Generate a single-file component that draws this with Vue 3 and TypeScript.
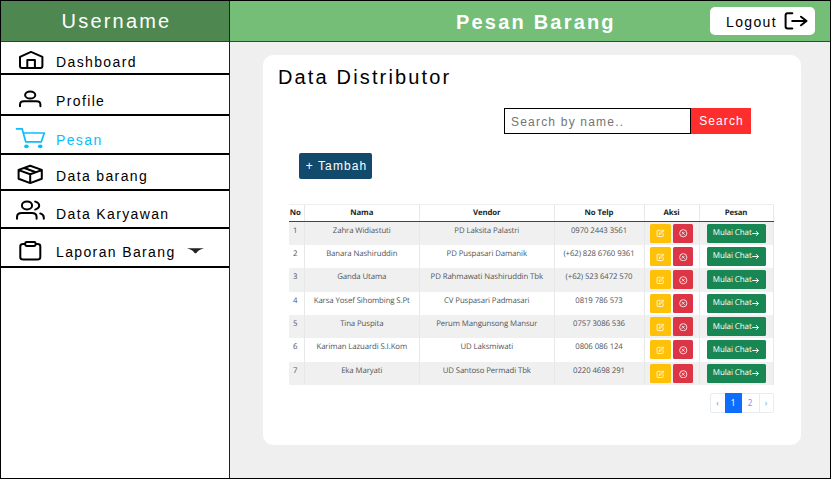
<script setup lang="ts">
interface MenuItem {
  label: string
  icon: string
  height: number
  shift: number
}
interface Distributor {
  name: string
  vendor: string
  phone: string
}

const menu: MenuItem[] = [
  { label: 'Dashboard', icon: 'home', height: 33, shift: 4 },
  { label: 'Profile', icon: 'user', height: 41, shift: 7 },
  { label: 'Pesan', icon: 'cart', height: 38.5, shift: 6 },
  { label: 'Data barang', icon: 'box', height: 36, shift: 4 },
  { label: 'Data Karyawan', icon: 'users', height: 38.5, shift: 5 },
  { label: 'Laporan Barang', icon: 'clipboard', height: 38.5, shift: 4 },
]

const rows: Distributor[] = [
  { name: 'Zahra Widiastuti', vendor: 'PD Laksita Palastri', phone: '0970 2443 3561' },
  { name: 'Banara Nashiruddin', vendor: 'PD Puspasari Damanik', phone: '(+62) 828 6760 9361' },
  { name: 'Ganda Utama', vendor: 'PD Rahmawati Nashiruddin Tbk', phone: '(+62) 523 6472 570' },
  { name: 'Karsa Yosef Sihombing S.Pt', vendor: 'CV Puspasari Padmasari', phone: '0819 786 573' },
  { name: 'Tina Puspita', vendor: 'Perum Mangunsong Mansur', phone: '0757 3086 536' },
  { name: 'Kariman Lazuardi S.I.Kom', vendor: 'UD Laksmiwati', phone: '0806 086 124' },
  { name: 'Eka Maryati', vendor: 'UD Santoso Permadi Tbk', phone: '0220 4698 291' },
]
</script>

<template>
  <div class="page">
    <aside class="sidebar">
      <div class="username">Username</div>
      <nav>
        <a
          v-for="item in menu"
          :key="item.label"
          class="item"
          :class="[item.icon, { active: item.icon === 'cart' }]"
          :style="{ height: item.height + 'px' }"
        >
          <svg class="icon" viewBox="0 0 30 24" fill="none" stroke="currentColor" stroke-width="2" stroke-linecap="round" stroke-linejoin="round">
            <template v-if="item.icon === 'home'">
              <path d="M5 8.900 16 3.900l11.400 5v9.200q0 2-2 2H7q-2 0-2-2z" />
              <path d="M12.300 20v-8.100h7.600V20" />
            </template>
            <template v-else-if="item.icon === 'user'">
              <ellipse cx="15.200" cy="8" rx="5.100" ry="3.600" />
              <path d="M5 19.300v-1.600q0-3.400 4-3.400h12.400q4 0 4 3.400v1.600" />
            </template>
            <template v-else-if="item.icon === 'cart'">
              <path d="M1.500 2.800h5.600l3.600 13h15.600l3-8.800H8.300" stroke-width="1.700" />
              <ellipse cx="11.400" cy="20.400" rx="2.300" ry="1.800" fill="currentColor" stroke="none" />
              <ellipse cx="25.200" cy="20.400" rx="2.300" ry="1.800" fill="currentColor" stroke="none" />
            </template>
            <template v-else-if="item.icon === 'box'">
              <path d="M15.200 3.800 26.800 7.900v8.900l-11.600 4.300-11.600-4.300V7.900zM3.700 8.100l11.500 4.200 11.500-4.200M15.200 12.300v8.600M9.300 6l11.500 4.200" />
            </template>
            <template v-else-if="item.icon === 'users'">
              <ellipse cx="12" cy="7.400" rx="5.100" ry="4" />
              <path d="M2 20.800v-1.600q0-4.100 4.800-4.100h10q4.800 0 4.800 4.100v1.600M20.200 3.600q4 1.200 4 4t-4 4M25.200 15.400q3.600 1 3.600 4.200v1.200" />
            </template>
            <template v-else>
              <path d="M9.700 5H8.300q-3 0-3 2.200v11q0 2.200 3 2.200h14q3 0 3-2.200V7.200q0-2.200-3-2.200h-1.400" />
              <rect x="10.200" y="3" width="10.400" height="3.900" rx="1.400" />
            </template>
          </svg>
          <span class="label" :style="{ paddingTop: item.shift + 'px' }">{{ item.label }}</span>
          <svg v-if="item.icon === 'clipboard'" class="caret" viewBox="0 0 17 6"><path d="M0 .3h17Q11 2 9.600 4.800 8.500 5.800 7.400 4.800 6 2 0 .3z" fill="#222" /></svg>
        </a>
      </nav>
    </aside>

    <div class="content">
      <header class="topbar">
        <h1>Pesan Barang</h1>
        <button class="logout">
          <span>Logout</span>
          <svg viewBox="0 0 24 18" fill="none" stroke="#000" stroke-width="2" stroke-linecap="round" stroke-linejoin="round">
            <path d="M8.300 1.200H3.600q-2 0-2 2v11.400q0 2 2 2h4.700M8.200 9h14.300M17 4.700 22.500 9 17 13.300" />
          </svg>
        </button>
      </header>

      <main class="card">
        <h2>Data Distributor</h2>
        <div class="search">
          <input type="text" placeholder="Search by name.." />
          <button>Search</button>
        </div>
        <button class="add">+ Tambah</button>

        <div class="grid">
          <div class="row head">
            <div>No</div><div>Nama</div><div>Vendor</div><div>No Telp</div><div>Aksi</div><div>Pesan</div>
          </div>
          <div v-for="(row, i) in rows" :key="row.name" class="row body">
            <div>{{ i + 1 }}</div>
            <div>{{ row.name }}</div>
            <div>{{ row.vendor }}</div>
            <div>{{ row.phone }}</div>
            <div class="actions">
              <button class="edit">
                <svg viewBox="0 0 16 16" fill="none" stroke="#fff" stroke-width="1.500"><path d="M8.500 2.500H3.300q-1.300 0-1.300 1.300v9q0 1.300 1.300 1.300h9q1.300 0 1.300-1.300V8M6 10.300l.5-2.600 6.200-6.200 2 2-6.200 6.200zM11.200 3l2 2" /></svg>
              </button>
              <button class="remove">
                <svg viewBox="0 0 16 16" fill="none" stroke="#fff" stroke-width="1.500"><circle cx="8" cy="8" r="6.800" /><path d="m5.300 5.300 5.400 5.400m0-5.400-5.400 5.400" /></svg>
              </button>
            </div>
            <div class="actions">
              <button class="chat">
                <span>Mulai Chat</span>
                <svg viewBox="0 0 8 8" fill="none" stroke="#fff" stroke-width="1.100"><path d="M.3 4h7M4.600 1.300 7.300 4 4.600 6.700" /></svg>
              </button>
            </div>
          </div>
        </div>

        <div class="pager">
          <span class="muted">‹</span><span class="current">1</span><span>2</span><span class="next">›</span>
        </div>
      </main>
    </div>
  </div>
</template>

<style>
body {
  margin: 0;
}
</style>

<style scoped>
* {
  box-sizing: border-box;
}
.page {
  display: flex;
  width: 831px;
  height: 479px;
  border: 1px solid #000;
  background: #efefef;
  font-family: 'Liberation Sans', Arial, sans-serif;
  letter-spacing: 1.370px;
  color: #000;
  overflow: hidden;
}
button {
  border: 0;
  padding: 0;
  font: inherit;
  letter-spacing: inherit;
  text-rendering: inherit;
  color: #fff;
}
.sidebar {
  width: 229px;
  flex: none;
  background: #fff;
  border-right: 1px solid #222;
}
.username {
  height: 41px;
  padding-left: 3px;
  border-bottom: 1px solid #2b432a;
  background: #4f8750;
  color: #fff;
  font-size: 20px;
  letter-spacing: 2.200px;
  line-height: 40px;
  text-align: center;
}
.item {
  display: flex;
  align-items: center;
  padding-left: 14px;
  border-bottom: 2px solid #000;
  font-size: 14px;
}
.active {
  color: #0cbdfb;
}
.icon {
  width: 30px;
  height: 24px;
  flex: none;
}
.home .icon {
  margin-top: 4px;
}
.user .icon {
  margin-top: 8px;
}
.cart .icon {
  margin-top: 8px;
}
.box .icon {
  margin-top: 4px;
}
.users .icon {
  margin-top: 3px;
}
.clipboard .icon {
  margin-top: 7px;
}
.label {
  margin-left: 11px;
  line-height: 16px;
  margin-top: 5px;
}
.caret {
  width: 17px;
  height: 6px;
  margin: 8px 0 0 11px;
}
.content {
  flex: 1;
  min-width: 0;
}
.topbar {
  display: flex;
  align-items: center;
  height: 41px;
  padding-right: 15px;
  border-bottom: 1px solid #2f4a30;
  background: #74be78;
}
h1 {
  margin: 2px auto 0 226px;
  color: #fff;
  font-size: 20px;
  letter-spacing: 2.200px;
  line-height: 24px;
}
.logout {
  display: flex;
  align-items: center;
  width: 105px;
  height: 28px;
  padding-left: 16px;
  border-radius: 5px;
  background: #fff;
  color: #000;
  font-size: 14px;
}
.logout span {
  padding-top: 2px;
}
.logout svg {
  width: 24px;
  height: 18px;
  margin-left: 7px;
}
.card {
  display: flex;
  flex-direction: column;
  width: 538px;
  height: 390px;
  margin: 13px 0 0 33px;
  border-radius: 10px;
  background: #fff;
}
h2 {
  margin: 10px 0 0 15px;
  font-size: 20px;
  font-weight: 400;
  letter-spacing: 2.150px;
  line-height: 24px;
}
.search {
  display: flex;
  margin: 19px 50px 0 0;
  align-self: flex-end;
  height: 26px;
  font-size: 12px;
}
.search input {
  width: 187px;
  padding: 2px 6px 0;
  border: 1px solid #000;
  border-radius: 0;
  background: #fff;
  font: inherit;
  letter-spacing: 1.200px;
  outline: 0;
}
.search input::placeholder {
  color: #757575;
}
.search button {
  width: 60px;
  padding-left: 1px;
  background: #ff2e2e;
  letter-spacing: 1.100px;
}
.add {
  width: 73px;
  height: 26px;
  margin: 19px 0 0 36px;
  padding-left: 2px;
  border-radius: 2px;
  background: #124a6b;
  font-size: 12px;
  letter-spacing: 1.100px;
}
.grid {
  width: 485px;
  margin: 24.500px 0 0 26px;
  border-top: 1px solid #eee;
  font-family: 'Open Sans', 'Noto Sans', sans-serif;
  font-size: 7.800px;
  letter-spacing: -0.100px;
  text-rendering: geometricPrecision;
  color: #505458;
}
.row {
  display: grid;
  grid-template-columns: 15.5px 115.5px 134.5px 90px 55px 74px;
}
.row > div {
  border-right: 1px solid #e6e8ea;
  text-align: center;
  white-space: nowrap;
}
.row > div:first-child {
  padding-right: 2px;
}
.head {
  height: 17px;
  border-bottom: 1px solid #454545;
  color: #212529;
  font-weight: 700;
  line-height: 16px;
}
.body {
  height: 23.400px;
  line-height: 18px;
}
.body:nth-child(even) {
  background: #f0f0f0;
}
.row .actions {
  display: flex;
  justify-content: center;
  gap: 2.500px;
  padding-top: 2px;
}
.actions button {
  display: flex;
  align-items: center;
  justify-content: center;
  height: 19px;
  border-radius: 1.500px;
}
.edit {
  width: 21px;
  background: #ffc107;
}
.remove {
  width: 20px;
  background: #dc3545;
}
.edit svg,
.remove svg {
  width: 8.500px;
  height: 8.500px;
  margin-top: 1px;
}
.actions .chat {
  width: 59px;
  background: #198754;
  font-size: 8px;
}
.chat svg {
  width: 7px;
  height: 7px;
  margin: 1px 0 0 0.500px;
}
.pager {
  display: flex;
  align-self: flex-end;
  width: 64px;
  height: 20px;
  margin: 8px 27.500px 0 0;
  border: 1px solid #e9ecef;
  border-radius: 2px;
  color: #6b9bf5;
  font: 8px/18px 'Noto Sans', 'Open Sans', sans-serif;
  letter-spacing: 0;
  text-align: center;
}
.pager span {
  width: 14px;
}
.pager .current {
  width: 17px;
  margin: -1px 0;
  line-height: 20px;
  background: #0d6efd;
  color: #fff;
}
.pager .current + span {
  width: 17px;
}
.pager .next {
  border-left: 1px solid #e9ecef;
}
.pager .muted {
  color: #8c9197;
}
</style>
